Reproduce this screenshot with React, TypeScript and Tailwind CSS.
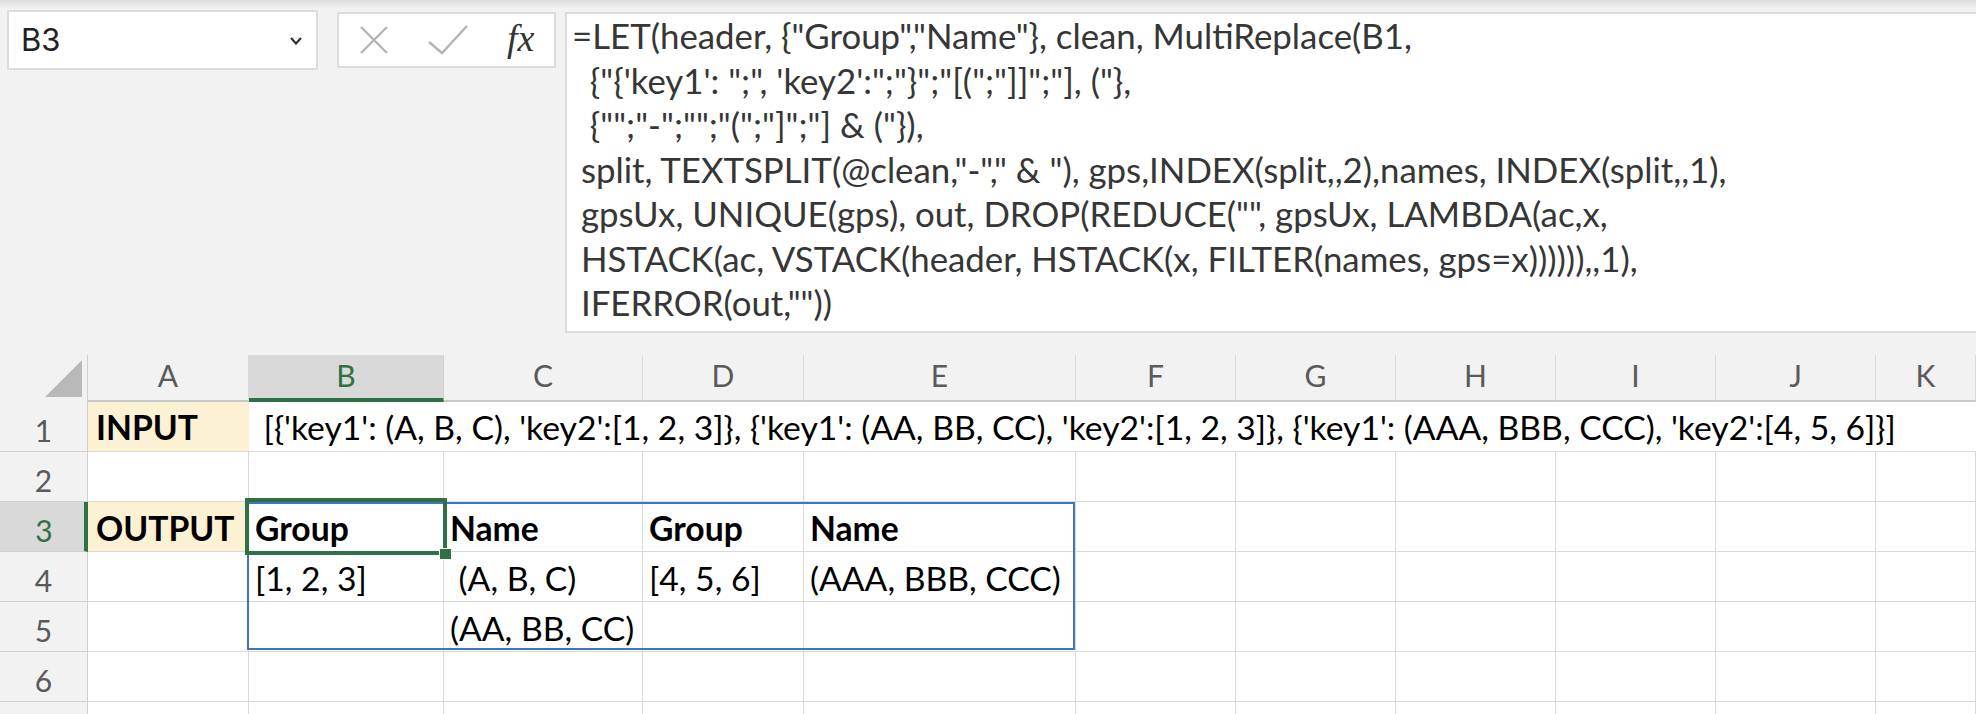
const cols =
  'grid grid-cols-[88px_161px_195px_199px_161px_272px_160px_160px_160px_160px_160px_100px]';

const letters = ['A', 'B', 'C', 'D', 'E', 'F', 'G', 'H', 'I', 'J', 'K'];

const formula = [
  '=LET(header, {"Group","Name"}, clean, MultiReplace(B1,',
  '  {"{\'key1\': ";", \'key2\':";"}";"[(";"]]";"], ("},',
  '  {"";"-";"";"(";"]";"] & ("}),',
  ' split, TEXTSPLIT(@clean,"-"," & "), gps,INDEX(split,,2),names, INDEX(split,,1),',
  ' gpsUx, UNIQUE(gps), out, DROP(REDUCE("", gpsUx, LAMBDA(ac,x,',
  ' HSTACK(ac, VSTACK(header, HSTACK(x, FILTER(names, gps=x)))))),,1),',
  ' IFERROR(out,""))',
];

const input =
  " [{'key1': (A, B, C), 'key2':[1, 2, 3]}, {'key1': (AA, BB, CC), 'key2':[1, 2, 3]}, {'key1': (AAA, BBB, CCC), 'key2':[4, 5, 6]}]";

// rows 2..7, columns A..K
const body: Record<number, Record<number, { text: string; bold?: boolean; cream?: boolean }>> = {
  3: {
    0: { text: 'OUTPUT', bold: true, cream: true },
    1: { text: 'Group', bold: true },
    2: { text: 'Name', bold: true },
    3: { text: 'Group', bold: true },
    4: { text: 'Name', bold: true },
  },
  4: {
    1: { text: '[1, 2, 3]' },
    2: { text: ' (A, B, C)' },
    3: { text: '[4, 5, 6]' },
    4: { text: '(AAA, BBB, CCC)' },
  },
  5: {
    2: { text: '(AA, BB, CC)' },
  },
};

function RowHead({ n, selected }: { n?: number; selected?: boolean }) {
  return (
    <div
      className={
        selected
          ? 'flex h-[50px] items-end justify-center border-b border-r-4 border-[#d0d0d0] border-r-[#2f7144] bg-[#d9d9d9] pb-[6px] pl-[4px] text-[30px] leading-none text-[#2f7144]'
          : 'flex h-[50px] items-end justify-center border-b border-r border-[#d0d0d0] bg-[#f2f2f2] pb-[6px] text-[30px] leading-none text-[#5a5a5a]'
      }
    >
      {n}
    </div>
  );
}

export default function App() {
  return (
    <div className="relative h-[714px] w-[1976px] overflow-hidden bg-[#f2f2f2] font-['Lato',sans-serif] text-black">
      <div className="h-[8px] bg-gradient-to-b from-[#dcdcdc] to-[#f2f2f2]" />

      {/* name box, buttons, formula bar */}
      <div className="flex h-[347px] items-start pt-[2px]">
        <div className="ml-[7px] flex h-[60px] w-[311px] items-center justify-between border-2 border-[#dcdcdc] bg-white pl-[12px] pr-[14px]">
          <span className="font-['Inter',sans-serif] text-[31px] text-[#222]">B3</span>
          <svg width="12" height="8" viewBox="0 0 12 8" className="mt-[2px]">
            <polyline points="1,1 6,6.5 11,1" fill="none" stroke="#333" strokeWidth="2.2" />
          </svg>
        </div>

        <div className="ml-[19px] mt-[2px] flex h-[56px] w-[219px] items-center justify-around border-2 border-[#dcdcdc] bg-white">
          <svg width="30" height="30" viewBox="0 0 30 30">
            <path d="M2 2 L28 28 M28 2 L2 28" stroke="#b4b4b4" strokeWidth="2.4" fill="none" />
          </svg>
          <svg width="40" height="30" viewBox="0 0 40 30">
            <polyline points="1,17 14,28 39,1" stroke="#b4b4b4" strokeWidth="2.4" fill="none" />
          </svg>
          <span className="pb-[4px] font-['Liberation_Serif',serif] text-[38px] italic leading-none text-[#333]">
            fx
          </span>
        </div>

        <div className="ml-[9px] mt-[2px] h-[321px] flex-1 border-2 border-r-0 border-[#dcdcdc] bg-white pl-[5px] pt-0">
          {formula.map((line, i) => (
            <div key={i} className="whitespace-pre text-[34.8px] leading-[44.5px] text-[#363636]">
              {line}
            </div>
          ))}
        </div>
      </div>

      {/* sheet */}
      <div className="relative">
        <div className={`${cols} h-[47px]`}>
          <div className="relative border-r border-[#d0d0d0]">
            <svg width="37" height="37" viewBox="0 0 37 37" className="absolute left-[45px] top-[5px]">
              <polygon points="37,0 37,37 0,37" fill="#b9b9b9" />
            </svg>
          </div>
          {letters.map((l) =>
            l === 'B' ? (
              <div
                key={l}
                className="flex items-end justify-center border-b-4 border-r border-[#d0d0d0] border-b-[#2f7144] bg-[#d9d9d9] pb-[8px] text-[30px] leading-none text-[#2f7144]"
              >
                {l}
              </div>
            ) : (
              <div
                key={l}
                className="flex items-end justify-center border-b-2 border-r border-[#c9c9c9] border-r-[#dadada] pb-[10px] text-[30px] leading-none text-[#5a5a5a]"
              >
                {l}
              </div>
            ),
          )}
        </div>

        {/* row 1 */}
        <div className={`${cols} h-[50px]`}>
          <RowHead n={1} />
          <div className="flex items-end border-b border-[#d9d9d9] bg-[#fcf2d3] pb-[6px] pl-[8px] text-[33.7px] font-bold leading-none">
            INPUT
          </div>
          <div className="col-span-10 flex items-end whitespace-pre border-b border-[#d9d9d9] bg-white pb-[6px] pl-[6px] text-[33.7px] leading-none">
            {input}
          </div>
        </div>

        {[2, 3, 4, 5, 6, 7].map((r) => (
          <div key={r} className={`${cols} h-[50px]`}>
            <RowHead n={r < 7 ? r : undefined} selected={r === 3} />
            {letters.map((_, c) => {
              const cell = body[r]?.[c];
              return (
                <div
                  key={c}
                  className={
                    cell?.cream
                      ? 'flex items-end whitespace-pre border-b border-r border-[#d9d9d9] border-r-[#fcf2d3] bg-[#fcf2d3] pb-[5px] pl-[8px] text-[33.7px] font-bold leading-none'
                      : cell?.bold
                        ? 'flex items-end whitespace-pre border-b border-r border-[#d9d9d9] bg-white pb-[5px] pl-[6px] text-[33.7px] font-bold leading-none'
                        : 'flex items-end whitespace-pre border-b border-r border-[#d9d9d9] bg-white pb-[5px] pl-[6px] text-[33.7px] leading-none'
                  }
                >
                  {cell?.text}
                </div>
              );
            })}
          </div>
        ))}

        {/* range outline B3:E5 */}
        <div className="pointer-events-none absolute left-[247px] top-[147px] h-[148px] w-[828px] border-2 border-[#4472c4]" />
        {/* active cell B3 */}
        <div className="pointer-events-none absolute left-[245px] top-[143px] h-[57px] w-[202px] border-4 border-[#2f7144]" />
        <div className="pointer-events-none absolute left-[439px] top-[193px] h-[12px] w-[13px] border border-white bg-[#2f7144]" />
      </div>
    </div>
  );
}
